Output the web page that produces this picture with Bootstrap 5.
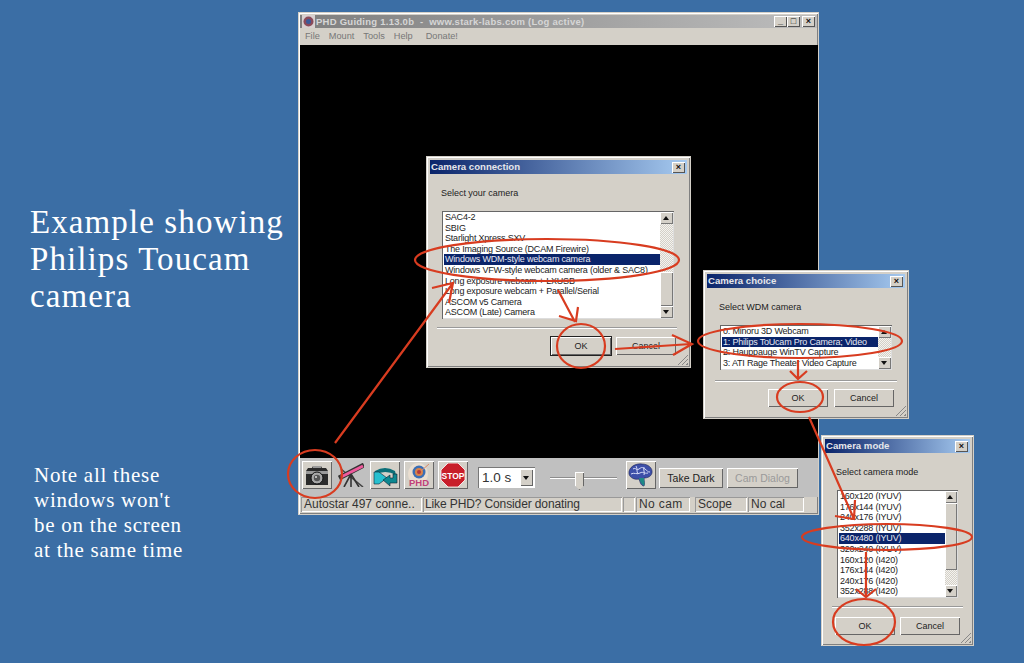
<!DOCTYPE html>
<html lang="en">
<head>
  <meta charset="UTF-8">
  <title>PHD Guiding camera setup</title>
  <link href="https://cdn.jsdelivr.net/npm/bootstrap@5.3.2/dist/css/bootstrap.min.css" rel="stylesheet">
  <style>
    body { width: 1024px; height: 663px; overflow: hidden; background: #3b6ea5; position: relative; font-family: "Liberation Sans", Arial, sans-serif; }
    .side-text { width: 298px; height: 663px; padding: 204px 0 0 30px; font-family: "Liberation Serif", serif; color: #fff; }
    .side-title { font-size: 33px; line-height: 37px; margin: 0; letter-spacing: 1.1px; }
    .side-note { font-size: 21px; line-height: 25px; margin: 148px 0 0 4px; letter-spacing: .75px; }

    .win { position: absolute; background: #d4d0c8; box-shadow: inset 1px 1px #fff, inset -1px -1px #808080, 0 0 0 1px #d4d0c8; font-family: "Liberation Sans", sans-serif; color: #222; }
    .main-win { left: 299px; top: 13px; width: 519px; height: 501px; padding: 2px 0 0 1px; }
    .conn-win { left: 427px; top: 157px; width: 263px; height: 210px; }
    .choice-win { left: 704px; top: 271px; width: 204px; height: 147px; }
    .mode-win { left: 822px; top: 436px; width: 151px; height: 209px; }

    .title-bar { height: 14px; margin: 3px 3px 0; padding: 0 2px 0 1px; background: linear-gradient(90deg, #0a246a, #a6caf0); color: #e6e6ea; font-size: 9.6px; font-weight: 700; line-height: 14px; }
    .main-win .title-bar { height: 13px; margin: 0 1px 0 0; padding-left: 2px; background: linear-gradient(90deg, #7f7f7f, #bdbdbd); color: #d6d6d6; font-size: 9.5px; line-height: 13px; letter-spacing: .25px; }
    .main-win .title-bar svg { margin-right: 1px; }
    .cap-btn { width: 13px; height: 11px; background: #d4d0c8; box-shadow: inset 1px 1px #fff, inset -1px -1px #555; color: #111; font: 700 9px/11px "Liberation Sans", sans-serif; text-align: center; letter-spacing: 0; flex: none; }
    .cap-close { margin-left: 2px; }
    .menu-row { height: 17px; gap: 9px; padding-left: 5px; font-size: 9.2px; line-height: 17px; color: #777; }
    .black-area { height: 413px; background: #000; }
    .tool-row { height: 39px; background: #c0c0c0; padding: 3px 0 0 2px; }
    .tool-btn { width: 30px; height: 28px; background: #d4d0c8; box-shadow: inset 1px 1px #fff, inset -1px -1px #666; flex: none; }
    .tool-btn svg { display: block; margin: 2px; }
    .flat-tool { background: #c0c0c0; box-shadow: none; }
    .txt-btn { height: 20px; margin-top: 7px; background: #d4d0c8; box-shadow: inset 1px 1px #fff, inset -1px -1px #666; font-size: 10.5px; line-height: 20px; text-align: center; flex: none; color: #222; }
    .dark-btn { width: 64px; margin-right: 4px; margin-left: -1px; }
    .cam-btn { width: 71px; color: #9a9a9a; }
    .time-pick { width: 57px; height: 21px; background: #fff; box-shadow: inset 1px 1px #777; margin: 6px 15px 0 10px; padding-left: 4px; font: 13.5px/21px "Liberation Sans", sans-serif; color: #333; flex: none; }
    .time-pick i { width: 13px; height: 17px; margin: 2px 2px 0 0; background: #d4d0c8; box-shadow: inset 1px 1px #fff, inset -1px -1px #666; display: block; position: relative; }
    .time-pick i::after { content: ""; position: absolute; left: 3px; top: 7px; border: 3px solid transparent; border-top: 4px solid #111; border-bottom: 0; }
    .slide-box { width: 67px; height: 28px; position: relative; margin-right: 9px; flex: none; }
    .slide-box::before { content: ""; position: absolute; left: 0; right: 0; top: 16px; height: 2px; background: #8c8c8c; border-bottom: 1px solid #fff; }
    .slide-box::after { content: ""; position: absolute; left: 25px; top: 11px; width: 9px; height: 18px; background: #d4d0c8; box-shadow: inset 1px 1px #fff, inset -1px -1px #666; clip-path: polygon(0 0, 100% 0, 100% 75%, 50% 100%, 0 75%); }
    .status-row { height: 15px; padding-left: 1px; gap: 1px; font: 12px/14px "Liberation Sans", sans-serif; color: #333; }
    .status-cell { box-shadow: inset 1px 1px #999, inset -1px -1px #fff; padding-left: 3px; white-space: nowrap; overflow: hidden; flex: none; height: 15px; }
    .status-tight { padding-left: 2px; letter-spacing: -.12px; }
    .status-wide { letter-spacing: .4px; }

    .dlg-label { font-size: 9px; line-height: 12px; margin: 0; letter-spacing: -.02px; }
    .pick-list { background: #fff; box-shadow: inset 1px 1px #666, inset -1px -1px #ddd; padding: 1px; font-size: 9px; line-height: 10.6px; letter-spacing: -.2px; color: #222; }
    .pick-items { flex: 1; white-space: nowrap; overflow: hidden; padding-left: 1px; }
    .pick-items div { padding-left: 1px; }
    .pick-items .on { background: #0a246a; color: #e8e8f2; }
    .scroll-col { width: 13px; flex: none; background: repeating-conic-gradient(#d4d0c8 0 25%, #f4f3ef 0 50%) 0 0 / 2px 2px; }
    .scroll-arrow, .scroll-thumb { background: #d4d0c8; box-shadow: inset 1px 1px #fff, inset -1px -1px #777; position: relative; }
    .scroll-arrow { height: 12px; }
    .scroll-arrow::after { content: ""; position: absolute; left: 3px; top: 4px; border: 3.5px solid transparent; border-bottom: 4px solid #111; border-top: 0; }
    .scroll-arrow.dn::after { border-top: 4px solid #111; border-bottom: 0; }
    .dlg-rule { height: 2px; border-top: 1px solid #999; border-bottom: 1px solid #fff; }
    .dlg-row { column-gap: 5px; }
    .dlg-btn { width: 60px; height: 18px; background: #d4d0c8; box-shadow: inset 1px 1px #fff, inset -1px -1px #666; font-size: 9px; line-height: 18px; text-align: center; color: #222; }
    .dlg-btn.dflt { box-shadow: 0 0 0 1px #222, inset 1px 1px #fff, inset -1px -1px #666; }
    .grip { position: absolute; right: 2px; bottom: 2px; width: 11px; height: 11px; background: repeating-linear-gradient(135deg, #d4d0c8 0 2px, #888 2px 3px); clip-path: polygon(100% 0, 100% 100%, 0 100%); }

    .conn-body { padding: 13px 13px 0 10px; }
    .conn-body .dlg-label { margin-left: 4px; }
    .conn-body .pick-list { margin: 12px 3px 0 5px; height: 108px; }
    .conn-body .dlg-rule { margin: 8px 0; }
    .conn-body .dlg-row { margin-right: 1px; }
    .conn-body .scroll-mid { height: 48px; }
    .conn-body .scroll-thumb { height: 34px; }
    .choice-body { padding: 13px 11px 0; }
    .choice-body .dlg-label { margin-left: 4px; }
    .choice-body .pick-list { margin: 12px 5px 0; height: 45px; }
    .choice-body .dlg-rule { margin: 10px 0 7px; }
    .choice-body .dlg-row { margin-right: 3px; column-gap: 6px; }
    .choice-body .scroll-mid { height: 19px; }
    .mode-body { padding: 13px 10px 0; }
    .mode-body .dlg-label { margin-left: 4px; }
    .mode-body .pick-list { margin: 12px 5px 0; height: 108px; }
    .mode-body .dlg-rule { margin: 8px 0 9px; }
    .mode-body .dlg-row { margin-right: 3px; }
    .mode-body .scroll-col { width: 12px; }
    .mode-body .scroll-arrow::after { left: 2px; }
    .mode-body .scroll-thumb { height: 67px; }
    .mode-body .scroll-mid { height: 15px; }
    .mark-layer { position: absolute; left: 0; top: 0; pointer-events: none; }
  </style>
</head>
<body>
  <div class="side-text">
    <h1 class="side-title fw-normal">Example showing Philips Toucam camera</h1>
    <p class="side-note">Note all these<br>windows won't<br>be on the screen<br>at the same time</p>
  </div>

  <!-- main PHD window -->
  <div class="win main-win">
    <div class="title-bar d-flex align-items-center">
      <svg width="13" height="13" viewBox="0 0 13 13" class="flex-shrink-0"><rect width="13" height="13" fill="#d8d0d0"/><circle cx="6.5" cy="6.5" r="5" fill="#8a4a5a"/><circle cx="6.5" cy="6.5" r="2.5" fill="#3a5a9a"/></svg>
      <span class="flex-grow-1 text-nowrap">PHD Guiding 1.13.0b &nbsp;-&nbsp; www.stark-labs.com (Log active)</span>
      <span class="cap-btn">_</span><span class="cap-btn">□</span><span class="cap-btn cap-close">×</span>
    </div>
    <div class="menu-row d-flex"><span>File</span><span>Mount</span><span>Tools</span><span>Help</span><span class="ms-1">Donate!</span></div>
    <div class="black-area"></div>
    <div class="tool-row d-flex">
      <div class="tool-btn me-1">
        <svg width="26" height="24" viewBox="0 0 26 24"><path d="M2 8l2-3h4l1-2h8l1 2h4l2 3v14H2z" fill="#2b2b2b"/><path d="M2 8h22v3H2zM9 3h8v2H9z" fill="#9a9a9a"/><circle cx="13" cy="15" r="6" fill="#a8a8a8" stroke="#111"/><circle cx="13" cy="15" r="3.2" fill="#555"/><circle cx="12" cy="14" r="1" fill="#ddd"/></svg>
      </div>
      <div class="tool-btn flat-tool me-1">
        <svg width="26" height="24" viewBox="0 0 26 24"><path d="M3 6 25 24" stroke="#444" stroke-width="1.5"/><path d="M1 15 26 2" stroke="#333" stroke-width="5"/><path d="M3 14 25 3" stroke="#ee5a9c" stroke-width="3"/><path d="m13 11-7 13M13 11v13M13 11l8 13" stroke="#333" stroke-width="1.6" fill="none"/></svg>
      </div>
      <div class="tool-btn me-1">
        <svg width="26" height="24" viewBox="0 0 26 24"><path d="M3 8q10-6 20 0l1 4q-11-6-21 0z" fill="#0d6f78"/><path d="M2 9h5l8 6-8 6H2z" fill="#27c0cf" stroke="#123" stroke-width=".6"/><path d="M25 11v9h-7v3l-7-6 7-5v3h3v-4z" fill="#0e8890" stroke="#123" stroke-width=".6"/></svg>
      </div>
      <div class="tool-btn me-1">
        <svg width="26" height="24" viewBox="0 0 26 24"><ellipse cx="12" cy="11" rx="10" ry="11" fill="#eaded0"/><circle cx="13" cy="9" r="6.5" fill="#3b6fb5"/><circle cx="13" cy="9" r="4" fill="#d8824a"/><circle cx="13" cy="9" r="2" fill="#b5373c"/><path d="m15 8 8-7" stroke="#d98a6a"/><text x="3" y="23" font-size="9.5" font-weight="700" fill="#c0407a" font-family="Liberation Sans">PHD</text></svg>
      </div>
      <div class="tool-btn">
        <svg width="26" height="24" viewBox="0 0 26 24"><path d="M8 0h10l7 7v10l-7 7H8l-7-7V7z" fill="#c81e2a" stroke="#fff" stroke-width=".8"/><text x="13" y="15.500" text-anchor="middle" font-size="8.500" font-weight="700" fill="#fff" font-family="Liberation Sans">STOP</text></svg>
      </div>
      <div class="time-pick d-flex justify-content-between"><span>1.0 s</span><i></i></div>
      <div class="slide-box"></div>
      <div class="tool-btn me-1">
        <svg width="26" height="24" viewBox="0 0 26 24"><path d="M1 11C0 4 8 0 14 1c6 0 11 4 10 9-1 4-5 5-8 5 0 3 1 6 0 8-3 0-4-4-5-7-4 1-9-1-10-5z" fill="#3d4fa8" stroke="#1c2458" stroke-width=".6"/><path d="M5 6c3-2 3 2 6 0s3-2 6 0 2 3 5 3M3 11c3-2 6 1 9-1s4 1 8 0M8 3c2 3 0 5 2 8M16 4c-1 3 1 5 0 8" stroke="#d5daf8" fill="none"/><path d="M11 15c1 3 2 6 5 8 1-3 0-5 0-8z" fill="#1f8a86"/></svg>
      </div>
      <div class="txt-btn dark-btn">Take Dark</div>
      <div class="txt-btn cam-btn">Cam Dialog</div>
    </div>
    <div class="status-row d-flex">
      <div class="status-cell" style="width:121px">Autostar 497 conne..</div>
      <div class="status-cell status-tight" style="width:199px">Like PHD? Consider donating</div>
      <div class="status-cell" style="width:12px"></div>
      <div class="status-cell status-wide" style="width:54px">No cam</div>
      <div class="status-cell ms-1" style="width:52px">Scope</div>
      <div class="status-cell" style="width:56px">No cal</div>
    </div>
  </div>

  <!-- camera connection -->
  <div class="win conn-win">
    <div class="title-bar d-flex justify-content-between align-items-center"><span>Camera connection</span><span class="cap-btn">×</span></div>
    <div class="conn-body">
      <p class="dlg-label">Select your camera</p>
      <div class="pick-list d-flex">
        <div class="pick-items">
          <div>SAC4-2</div><div>SBIG</div><div>Starlight Xpress SXV</div><div>The Imaging Source (DCAM Firewire)</div>
          <div class="on">Windows WDM-style webcam camera</div>
          <div>Windows VFW-style webcam camera (older &amp; SAC8)</div>
          <div>Long exposure webcam + LXUSB</div><div>Long exposure webcam + Parallel/Serial</div>
          <div>ASCOM v5 Camera</div><div>ASCOM (Late) Camera</div>
        </div>
        <div class="scroll-col">
          <div class="scroll-arrow"></div><div class="scroll-mid"></div><div class="scroll-thumb"></div><div class="scroll-arrow dn"></div>
        </div>
      </div>
      <div class="dlg-rule"></div>
      <div class="d-flex justify-content-end dlg-row"><div class="dlg-btn dflt">OK</div><div class="dlg-btn">Cancel</div></div>
    </div>
    <div class="grip"></div>
  </div>

  <!-- camera choice -->
  <div class="win choice-win">
    <div class="title-bar d-flex justify-content-between align-items-center"><span>Camera choice</span><span class="cap-btn">×</span></div>
    <div class="choice-body">
      <p class="dlg-label">Select WDM camera</p>
      <div class="pick-list d-flex">
        <div class="pick-items">
          <div>0: Minoru 3D Webcam</div>
          <div class="on">1: Philips ToUcam Pro Camera; Video</div>
          <div>2: Hauppauge WinTV Capture</div>
          <div>3: ATI Rage Theater Video Capture</div>
        </div>
        <div class="scroll-col">
          <div class="scroll-arrow"></div><div class="scroll-mid"></div><div class="scroll-arrow dn"></div>
        </div>
      </div>
      <div class="dlg-rule"></div>
      <div class="d-flex justify-content-end dlg-row"><div class="dlg-btn">OK</div><div class="dlg-btn">Cancel</div></div>
    </div>
    <div class="grip"></div>
  </div>

  <!-- camera mode -->
  <div class="win mode-win">
    <div class="title-bar d-flex justify-content-between align-items-center"><span>Camera mode</span><span class="cap-btn">×</span></div>
    <div class="mode-body">
      <p class="dlg-label">Select camera mode</p>
      <div class="pick-list d-flex">
        <div class="pick-items">
          <div>160x120 (IYUV)</div><div>176x144 (IYUV)</div><div>240x176 (IYUV)</div><div>352x288 (IYUV)</div>
          <div class="on">640x480 (IYUV)</div>
          <div>320x240 (IYUV)</div><div>160x120 (I420)</div><div>176x144 (I420)</div><div>240x176 (I420)</div><div>352x288 (I420)</div>
        </div>
        <div class="scroll-col">
          <div class="scroll-arrow"></div><div class="scroll-thumb"></div><div class="scroll-mid"></div><div class="scroll-arrow dn"></div>
        </div>
      </div>
      <div class="dlg-rule"></div>
      <div class="d-flex justify-content-end dlg-row"><div class="dlg-btn">OK</div><div class="dlg-btn">Cancel</div></div>
    </div>
    <div class="grip"></div>
  </div>

  <!-- hand drawn red marks over everything -->
  <svg class="mark-layer" width="1024" height="663" viewBox="0 0 1024 663" fill="none" stroke="#d83c20" stroke-width="2.2">
    <ellipse cx="315" cy="474" rx="27" ry="24"/>
    <path d="M335 443 453 283M432 288l21-5-4 20"/>
    <ellipse cx="547" cy="260" rx="132" ry="21"/>
    <path d="M558 290 575 322M559 316l17 5 2-14"/>
    <ellipse cx="581" cy="346" rx="24" ry="22"/>
    <path d="M615 349 691 344M672 335l20 9-19 11"/>
    <ellipse cx="800" cy="341" rx="102" ry="17"/>
    <path d="M798 360V379M790 371l8 8 9-8"/>
    <ellipse cx="800" cy="397" rx="23" ry="15"/>
    <path d="M809 417 854 519M835 516l19 3 1-19"/>
    <ellipse cx="887" cy="537" rx="85" ry="13"/>
    <path d="M866 552V597M856 589l10 8 10-8"/>
    <ellipse cx="864" cy="622" rx="31" ry="23"/>
  </svg>
</body>
</html>
